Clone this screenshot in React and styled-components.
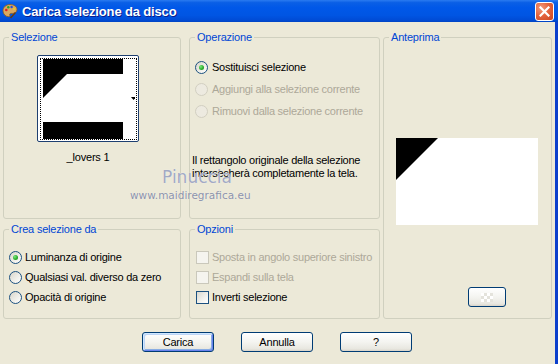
import React from "react";
import styled, { createGlobalStyle } from "styled-components";

const Global = createGlobalStyle`
  html, body { margin: 0; padding: 0; background: #ECE9D8; }
  body { font-family: "Liberation Sans", Arial, sans-serif; font-size: 11px; color: #000; }
  * { box-sizing: border-box; }
`;

const Window = styled.div`
  position: relative;
  width: 558px;
  height: 364px;
  display: flex;
  flex-direction: column;
  background: #ECE9D8;
  overflow: hidden;
`;

const TitleBar = styled.div`
  height: 22px;
  flex: none;
  display: flex;
  align-items: center;
  padding-left: 2px;
  padding-right: 4px;
  background: linear-gradient(180deg, #2A7BF0 0%, #0A5FE6 12%, #0058E8 35%, #0055E3 70%, #004CD6 90%, #0044C4 100%);
`;

const TitleText = styled.span`
  flex: 1;
  margin-left: 4px;
  color: #fff;
  font-family: "Liberation Sans", Arial, sans-serif;
  font-weight: bold;
  font-size: 13px;
  letter-spacing: -0.15px;
  text-shadow: 1px 1px 0 #0A1E8C;
`;

const CloseButton = styled.div`
  width: 19px;
  height: 19px;
  margin-top: 1px;
  border: 1px solid #fff;
  border-radius: 3px;
  background: radial-gradient(circle at 30% 30%, #F29A7E 0%, #E4653F 45%, #CC4420 100%);
  display: flex;
  align-items: center;
  justify-content: center;
`;

const Body = styled.div`
  flex: 1;
  border-right: 3px solid #0B3FCC;
  padding: 9px 0 0 3px;
  display: flex;
  flex-direction: column;
`;

const Grid = styled.div`
  display: grid;
  grid-template-columns: 178px 8px 191px 3px 169px;
  grid-template-rows: 188px 96px;
  row-gap: 4px;
`;

const Group = styled.fieldset`
  margin: 0;
  padding: 0;
  min-width: 0;
  border: 1px solid #D0D0BF;
  border-radius: 3px;
  grid-column: ${p => p.$col};
  grid-row: ${p => p.$row};
`;

const Legend = styled.legend`
  margin-left: 5px;
  padding: 0 2px;
  color: #0046D5;
  font-size: 11px;
  line-height: 13px;
  letter-spacing: -0.2px;
`;

const ThumbArea = styled.div`
  padding: 11px 0 0 33px;
  display: flex;
  flex-direction: column;
  align-items: flex-start;
`;

const ThumbColumn = styled.div`
  display: flex;
  flex-direction: column;
  align-items: center;
`;

const Thumb = styled.div`
  width: 102px;
  height: 87px;
  border: 1px solid #1E3F70;
  border-radius: 2px;
  padding: 2px 1px 1px 2px;
  background: #fff;
`;

const FocusRing = styled.div`
  width: 100%;
  height: 100%;
  border: 1px dotted #000;
  display: flex;
`;

const ThumbLabel = styled.div`
  margin-top: 9px;
  line-height: 13px;
  letter-spacing: -0.2px;
`;

const OptionList = styled.div`
  padding: ${p => p.$pad};
  display: flex;
  flex-direction: column;
`;

const OptionRow = styled.label`
  height: ${p => p.$h}px;
  display: flex;
  align-items: center;
  gap: ${p => p.$gap ?? 4}px;
  color: ${p => (p.$disabled ? "#ACA899" : "#000")};
  letter-spacing: -0.25px;
  white-space: nowrap;
`;

const Radio = styled.span`
  width: 13px;
  height: 13px;
  flex: none;
  border-radius: 50%;
  border: 1px solid ${p => (p.$disabled ? "#D2CFC1" : "#1C5180")};
  background: ${p =>
    p.$disabled
      ? "#EDEAE0"
      : "linear-gradient(135deg, #D8D5C9 0%, #EFEEE8 55%, #FFFFFF 100%)"};
  display: flex;
  align-items: center;
  justify-content: center;
  &::after {
    content: "";
    display: ${p => (p.$checked ? "block" : "none")};
    width: 5px;
    height: 5px;
    border-radius: 50%;
    background: radial-gradient(circle at 35% 35%, #7BE87B 0%, #2DAE2D 55%, #168A16 100%);
  }
`;

const Check = styled.span`
  width: 13px;
  height: 13px;
  flex: none;
  border: 1px solid ${p => (p.$disabled ? "#CAC8BB" : "#1C5180")};
  background: ${p =>
    p.$disabled ? "#F5F4EF" : "linear-gradient(135deg, #D9D8D0 0%, #F2F2EE 60%, #FFFFFF 100%)"};
`;

const Note = styled.div`
  margin-top: 32px;
  padding-left: 2px;
  line-height: 13px;
  letter-spacing: -0.25px;
`;

const PreviewArea = styled.div`
  padding: 94px 0 0 12px;
  display: flex;
  flex-direction: column;
  align-items: flex-start;
`;

const PreviewBox = styled.div`
  width: 142px;
  height: 87px;
  display: flex;
`;

const SmallButton = styled.div`
  margin: 62px 0 0 72px;
  width: 38px;
  height: 20px;
  border: 1px solid #003C74;
  border-radius: 3px;
  background: linear-gradient(180deg, #FFFFFF 0%, #F4F4F0 50%, #E8E7E0 88%, #D8D3C8 100%);
  display: flex;
  align-items: center;
  justify-content: center;
`;

const Footer = styled.div`
  margin-top: 13px;
  padding-left: 139px;
  display: flex;
  gap: 27px;
`;

const Button = styled.button`
  width: 72px;
  height: 20px;
  padding: 0;
  border: 1px solid #003C74;
  border-radius: 3px;
  font-family: "Liberation Sans", Arial, sans-serif;
  font-size: 11px;
  letter-spacing: -0.2px;
  color: #000;
  background: linear-gradient(180deg, #FFFFFF 0%, #F4F4F0 50%, #E8E7E0 88%, #D8D3C8 100%);
  box-shadow: ${p =>
    p.$default
      ? "inset 1px 1px 0 #CEE7FF, inset -1px -1px 0 #6982EE, inset 2px 2px 0 #BCD4F6, inset -2px -2px 0 #89ADE4"
      : "none"};
`;

const Watermark = styled.div`
  position: absolute;
  left: ${p => p.$x}px;
  top: ${p => p.$y}px;
  font-family: "DejaVu Sans", Verdana, sans-serif;
  font-size: ${p => p.$size}px;
  line-height: 1;
  color: ${p => p.$color};
  text-shadow: 0 0 1px rgba(255, 255, 255, 0.8);
  pointer-events: none;
  white-space: nowrap;
`;

function PaletteIcon() {
  return (
    <svg width="16" height="16" viewBox="0 0 16 16">
      <path d="M8 1.5C4 1.5 1 4.3 1 7.8c0 3.3 2.6 5.9 5.6 5.9 1.2 0 1.5-.7 1.2-1.5-.4-1 .2-1.8 1.3-1.8h1.6c2.3 0 4.3-1.5 4.3-4C15 3.6 11.9 1.5 8 1.5z" fill="#D9A860" stroke="#8A5A20" strokeWidth="0.8" />
      <circle cx="4.3" cy="7" r="1.3" fill="#E02020" />
      <circle cx="6.3" cy="4.2" r="1.2" fill="#2AA02A" />
      <circle cx="9.6" cy="4" r="1.2" fill="#2050E0" />
      <circle cx="12.2" cy="6" r="1.1" fill="#F0D020" />
      <path d="M13.5 9.5 L8.5 15" stroke="#6A3A10" strokeWidth="1.5" />
    </svg>
  );
}

function CloseX() {
  return (
    <svg width="11" height="11" viewBox="0 0 11 11">
      <path d="M1.5 1.5 L9.5 9.5 M9.5 1.5 L1.5 9.5" stroke="#fff" strokeWidth="2.2" strokeLinecap="square" />
    </svg>
  );
}

function ThumbImage() {
  return (
    <svg width="94" height="80" viewBox="0 0 94 80">
      <rect x="0" y="0" width="94" height="80" fill="#fff" />
      <rect x="2" y="0" width="80" height="15" fill="#000" />
      <polygon points="2,15 26,15 2,39" fill="#000" />
      <rect x="2" y="63" width="80" height="17" fill="#000" />
      <polygon points="90,38 95,38 92.5,41" fill="#000" />
    </svg>
  );
}

function PreviewImage() {
  return (
    <svg width="142" height="87" viewBox="0 0 142 87">
      <rect x="0" y="0" width="142" height="87" fill="#fff" />
      <polygon points="0,0 42,0 0,42" fill="#000" />
    </svg>
  );
}

function Checker() {
  const cells = [];
  for (let r = 0; r < 3; r++) {
    for (let c = 0; c < 4; c++) {
      cells.push(
        <rect key={`${r}-${c}`} x={c * 3} y={r * 3} width="3" height="3" fill={(r + c) % 2 ? "#E4E3DC" : "#FFFFFF"} />
      );
    }
  }
  return (
    <svg width="12" height="9" viewBox="0 0 12 9">
      {cells}
    </svg>
  );
}

export default function App() {
  return (
    <>
      <Global />
      <Window>
        <TitleBar>
          <PaletteIcon />
          <TitleText>Carica selezione da disco</TitleText>
          <CloseButton>
            <CloseX />
          </CloseButton>
        </TitleBar>
        <Body>
          <Grid>
            <Group $col="1" $row="1">
              <Legend>Selezione</Legend>
              <ThumbArea>
                <ThumbColumn>
                  <Thumb>
                    <FocusRing>
                      <ThumbImage />
                    </FocusRing>
                  </Thumb>
                  <ThumbLabel>_lovers 1</ThumbLabel>
                </ThumbColumn>
              </ThumbArea>
            </Group>

            <Group $col="3" $row="1">
              <Legend>Operazione</Legend>
              <OptionList $pad="12px 0 0 5px">
                <OptionRow $h={22}>
                  <Radio $checked />
                  Sostituisci selezione
                </OptionRow>
                <OptionRow $h={22} $disabled>
                  <Radio $disabled />
                  Aggiungi alla selezione corrente
                </OptionRow>
                <OptionRow $h={22} $disabled>
                  <Radio $disabled />
                  Rimuovi dalla selezione corrente
                </OptionRow>
              </OptionList>
              <Note>
                Il rettangolo originale della selezione
                <br />
                intersecherà completamente la tela.
              </Note>
            </Group>

            <Group $col="5" $row="1 / span 2">
              <Legend>Anteprima</Legend>
              <PreviewArea>
                <PreviewBox>
                  <PreviewImage />
                </PreviewBox>
                <SmallButton>
                  <Checker />
                </SmallButton>
              </PreviewArea>
            </Group>

            <Group $col="1" $row="2">
              <Legend>Crea selezione da</Legend>
              <OptionList $pad="11px 0 0 5px">
                <OptionRow $h={20} $gap={3}>
                  <Radio $checked />
                  Luminanza di origine
                </OptionRow>
                <OptionRow $h={20} $gap={3}>
                  <Radio />
                  Qualsiasi val. diverso da zero
                </OptionRow>
                <OptionRow $h={20} $gap={3}>
                  <Radio />
                  Opacità di origine
                </OptionRow>
              </OptionList>
            </Group>

            <Group $col="3" $row="2">
              <Legend>Opzioni</Legend>
              <OptionList $pad="11px 0 0 6px">
                <OptionRow $h={20} $gap={3} $disabled>
                  <Check $disabled />
                  Sposta in angolo superiore sinistro
                </OptionRow>
                <OptionRow $h={20} $gap={3} $disabled>
                  <Check $disabled />
                  Espandi sulla tela
                </OptionRow>
                <OptionRow $h={20} $gap={3}>
                  <Check />
                  Inverti selezione
                </OptionRow>
              </OptionList>
            </Group>
          </Grid>
          <Footer>
            <Button $default>Carica</Button>
            <Button>Annulla</Button>
            <Button>?</Button>
          </Footer>
        </Body>
        <Watermark $x={162} $y={169} $size={17} $color="#A2A9C4">Pinuccia</Watermark>
        <Watermark $x={130} $y={190} $size={10.5} $color="#8C92AA">www.maidiregrafica.eu</Watermark>
      </Window>
    </>
  );
}
